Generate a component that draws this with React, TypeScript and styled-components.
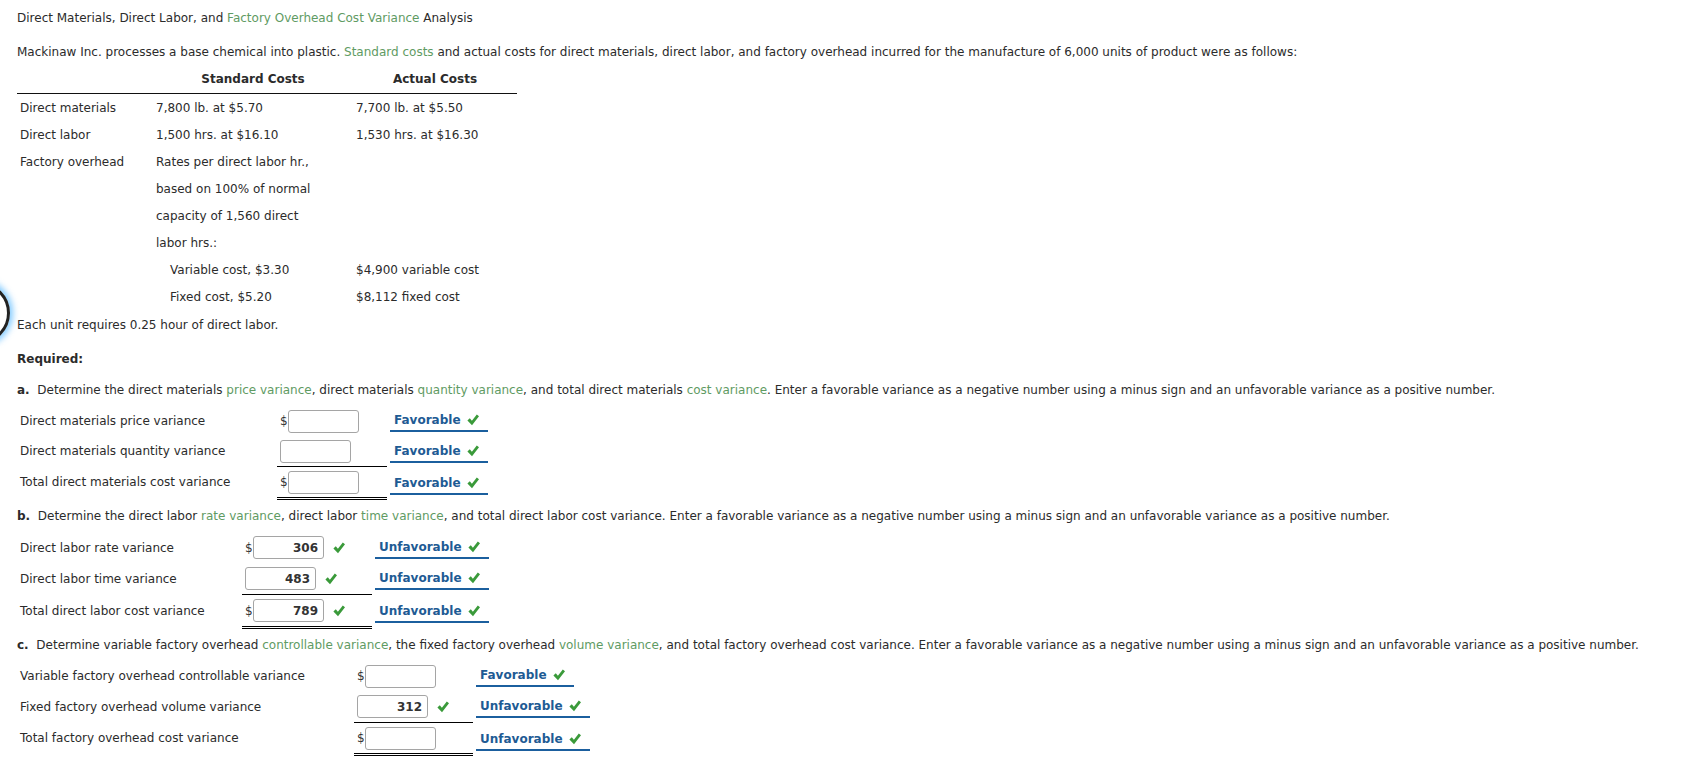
import React from 'react';
import styled, { createGlobalStyle } from 'styled-components';

const GlobalStyle = createGlobalStyle`
  html, body { margin: 0; padding: 0; background: #ffffff; }
  body {
    font-family: "DejaVu Sans", Verdana, sans-serif;
    font-size: 12px;
    color: #2b2b2b;
  }
`;

const Page = styled.div`
  position: relative;
  padding: 10px 0 0 17px;
`;

const FocusRing = styled.div`
  position: absolute;
  left: -52px;
  top: 282px;
  width: 56px;
  height: 56px;
  border-radius: 50%;
  border: 3px solid #222;
  box-shadow: 0 0 6px 3px rgba(90, 185, 255, 0.75);
`;

const Line = styled.p<{ $mt?: number }>`
  margin: ${(p) => p.$mt ?? 0}px 0 0;
  line-height: 16px;
  white-space: nowrap;
`;

const Term = styled.span`
  color: #5f9b63;
`;

const Bold = styled.span`
  font-weight: bold;
`;

const CostTable = styled.div`
  margin-top: 6px;
  display: grid;
  grid-template-columns: 136px 200px 164px;
  grid-template-rows: 28px;
  grid-auto-rows: 27px;
  width: 500px;
`;

const HeadCell = styled.div`
  display: flex;
  align-items: center;
  justify-content: center;
  font-weight: bold;
  border-bottom: 1px solid #111;
  padding-bottom: 1px;
`;

const Cell = styled.div<{ $indent?: number }>`
  display: flex;
  align-items: center;
  padding-left: ${(p) => 3 + (p.$indent ?? 0)}px;
  white-space: nowrap;
`;

const AnswerGrid = styled.div<{ $label: number; $cell: number }>`
  margin-top: 8px;
  display: grid;
  grid-template-columns: ${(p) => p.$label}px ${(p) => p.$cell}px auto;
  justify-content: start;
`;

const RowLabel = styled.div<{ $h: number }>`
  height: ${(p) => p.$h}px;
  display: flex;
  align-items: center;
  padding-left: 3px;
  white-space: nowrap;
  align-self: start;
`;

const AmountCell = styled.div<{ $h: number; $rule: 'none' | 'single' | 'double' }>`
  height: ${(p) => p.$h}px;
  display: flex;
  align-items: center;
  padding-left: 3px;
  border-bottom: ${(p) =>
    p.$rule === 'single' ? '1px solid #000' : p.$rule === 'double' ? '3px double #000' : '0'};
`;

const Dollar = styled.span`
  display: inline-block;
  width: 8px;
  font-size: 12px;
  color: #333;
`;

const AmountInput = styled.input`
  box-sizing: border-box;
  width: 71px;
  height: 23px;
  margin: 0;
  border: 1px solid #a5a5a5;
  border-radius: 3px;
  padding: 0 5px;
  text-align: right;
  font-family: "DejaVu Sans", Verdana, sans-serif;
  font-size: 12px;
  font-weight: bold;
  color: #333;
  background: #fff;
  outline: none;
`;

const CheckWrap = styled.span<{ $gap: number }>`
  display: inline-flex;
  margin-left: ${(p) => p.$gap}px;
`;

const Choice = styled.div`
  align-self: center;
  justify-self: start;
  margin-left: 3px;
  display: inline-flex;
  align-items: center;
  gap: 6px;
  padding: 2px 9px 2px 4px;
  line-height: 16px;
  border-bottom: 2px solid #1b5f9e;
  color: #1e5b94;
  font-weight: bold;
  white-space: nowrap;
`;

const Check = () => (
  <svg width="12" height="12" viewBox="0 0 12 12" aria-hidden="true">
    <path d="M0.4 6.4 L2.8 4.3 L4.9 6.8 L9.8 0.5 L12 2.3 L5.0 11.3 Z" fill="#3a9a3a" />
  </svg>
);

type Row = {
  label: string;
  dollar: boolean;
  value?: string;
  checked: boolean;
  choice: string;
  rule: 'none' | 'single' | 'double';
};

type Section = {
  label: number;
  cell: number;
  rows: Row[];
};

const AnswerTable = ({ section }: { section: Section }) => (
  <AnswerGrid $label={section.label} $cell={section.cell}>
    {section.rows.map((r) => {
      const h = r.checked ? 31 : 30;
      return (
        <React.Fragment key={r.label}>
          <RowLabel $h={h}>{r.label}</RowLabel>
          <AmountCell $h={h} $rule={r.rule}>
            {r.dollar && <Dollar>$</Dollar>}
            <AmountInput readOnly value={r.value ?? ''} />
            {r.checked && (
              <CheckWrap $gap={9}>
                <Check />
              </CheckWrap>
            )}
          </AmountCell>
          <Choice>
            {r.choice}
            <Check />
          </Choice>
        </React.Fragment>
      );
    })}
  </AnswerGrid>
);

const sectionA: Section = {
  label: 260,
  cell: 110,
  rows: [
    { label: 'Direct materials price variance', dollar: true, checked: false, choice: 'Favorable', rule: 'none' },
    { label: 'Direct materials quantity variance', dollar: false, checked: false, choice: 'Favorable', rule: 'single' },
    { label: 'Total direct materials cost variance', dollar: true, checked: false, choice: 'Favorable', rule: 'double' },
  ],
};

const sectionB: Section = {
  label: 225,
  cell: 130,
  rows: [
    { label: 'Direct labor rate variance', dollar: true, value: '306', checked: true, choice: 'Unfavorable', rule: 'none' },
    { label: 'Direct labor time variance', dollar: false, value: '483', checked: true, choice: 'Unfavorable', rule: 'single' },
    { label: 'Total direct labor cost variance', dollar: true, value: '789', checked: true, choice: 'Unfavorable', rule: 'double' },
  ],
};

const sectionC: Section = {
  label: 337,
  cell: 119,
  rows: [
    { label: 'Variable factory overhead controllable variance', dollar: true, checked: false, choice: 'Favorable', rule: 'none' },
    { label: 'Fixed factory overhead volume variance', dollar: false, value: '312', checked: true, choice: 'Unfavorable', rule: 'single' },
    { label: 'Total factory overhead cost variance', dollar: true, checked: false, choice: 'Unfavorable', rule: 'double' },
  ],
};

const ENTER =
  ' Enter a favorable variance as a negative number using a minus sign and an unfavorable variance as a positive number.';

export default function App() {
  return (
    <>
      <GlobalStyle />
      <Page>
        <FocusRing />
        <Line>
          Direct Materials, Direct Labor, and <Term>Factory Overhead Cost Variance</Term> Analysis
        </Line>
        <Line $mt={18}>
          Mackinaw Inc. processes a base chemical into plastic. <Term>Standard costs</Term> and actual costs for
          direct materials, direct labor, and factory overhead incurred for the manufacture of 6,000 units of
          product were as follows:
        </Line>

        <CostTable>
          <HeadCell />
          <HeadCell>Standard Costs</HeadCell>
          <HeadCell>Actual Costs</HeadCell>

          <Cell>Direct materials</Cell>
          <Cell>7,800 lb. at $5.70</Cell>
          <Cell>7,700 lb. at $5.50</Cell>

          <Cell>Direct labor</Cell>
          <Cell>1,500 hrs. at $16.10</Cell>
          <Cell>1,530 hrs. at $16.30</Cell>

          <Cell>Factory overhead</Cell>
          <Cell>Rates per direct labor hr.,</Cell>
          <Cell />

          <Cell />
          <Cell>based on 100% of normal</Cell>
          <Cell />

          <Cell />
          <Cell>capacity of 1,560 direct</Cell>
          <Cell />

          <Cell />
          <Cell>labor hrs.:</Cell>
          <Cell />

          <Cell />
          <Cell $indent={14}>Variable cost, $3.30</Cell>
          <Cell>$4,900 variable cost</Cell>

          <Cell />
          <Cell $indent={14}>Fixed cost, $5.20</Cell>
          <Cell>$8,112 fixed cost</Cell>
        </CostTable>

        <Line $mt={7}>Each unit requires 0.25 hour of direct labor.</Line>
        <Line $mt={18}>
          <Bold>Required:</Bold>
        </Line>

        <Line $mt={15}>
          <Bold>a.</Bold>&nbsp; Determine the direct materials <Term>price variance</Term>, direct materials{' '}
          <Term>quantity variance</Term>, and total direct materials <Term>cost variance</Term>.{ENTER}
        </Line>
        <AnswerTable section={sectionA} />

        <Line $mt={8}>
          <Bold>b.</Bold>&nbsp; Determine the direct labor <Term>rate variance</Term>, direct labor{' '}
          <Term>time variance</Term>, and total direct labor cost variance.{ENTER}
        </Line>
        <AnswerTable section={sectionB} />

        <Line $mt={8}>
          <Bold>c.</Bold>&nbsp; Determine variable factory overhead <Term>controllable variance</Term>, the fixed
          factory overhead <Term>volume variance</Term>, and total factory overhead cost variance.{ENTER}
        </Line>
        <AnswerTable section={sectionC} />
      </Page>
    </>
  );
}
